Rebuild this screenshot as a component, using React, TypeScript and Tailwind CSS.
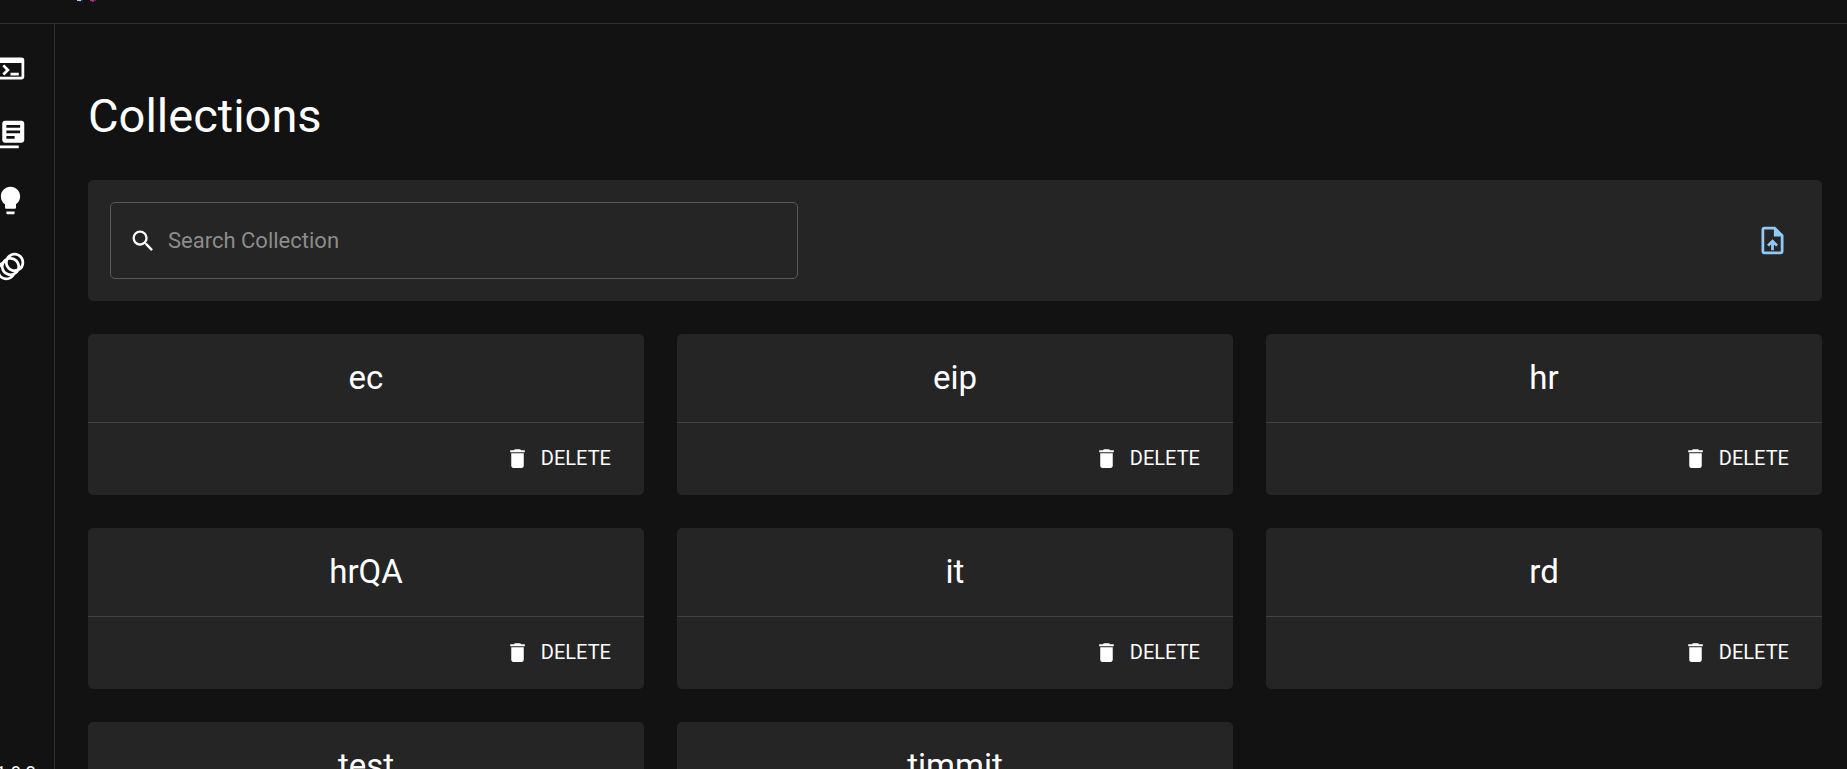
import { useState } from "react";
import {
  MdAnimation,
  MdDelete,
  MdLibraryBooks,
  MdLightbulb,
  MdSearch,
  MdTerminal,
  MdUploadFile,
} from "react-icons/md";

const navigation = [
  { label: "Playground", icon: MdTerminal },
  { label: "Collections", icon: MdLibraryBooks },
  { label: "Prompts", icon: MdLightbulb },
  { label: "Models", icon: MdAnimation },
];

const collections = ["ec", "eip", "hr", "hrQA", "it", "rd", "test", "timmit"];

function Header() {
  return (
    <header className="flex h-6 shrink-0 items-start overflow-hidden border-b border-[#303030] pl-[76px]">
      <svg width="22" height="3" viewBox="0 0 22 3" aria-hidden="true">
        <path d="M1 0h5v1H5v1H3V1H1z" fill="#b4c6ee" />
        <path d="M5 0h2v1H5v1H3V1h2z" fill="#24366f" />
        <path d="M14 0h5v1h-1v1h-2V1h-2z" fill="#e0244f" />
        <path d="M18 0h2v1h-2v1h-1V1h1z" fill="#24366f" />
      </svg>
    </header>
  );
}

function Sidebar() {
  return (
    <aside className="flex w-[55px] shrink-0 flex-col justify-between overflow-hidden border-r border-[#303030] pt-7">
      <nav className="-ml-1.5 flex flex-col items-start gap-[33px]">
        {navigation.map(({ label, icon: Icon }) => (
          <a key={label} href="#" aria-label={label}>
            <Icon className="size-[33px]" />
          </a>
        ))}
      </nav>
      <p className="-mb-4 -ml-1 text-lg leading-6">1.8.3</p>
    </aside>
  );
}

function CollectionCard({ name }: { name: string }) {
  return (
    <article className="rounded-[5px] bg-[#252525]">
      <h2 className="border-b border-[#424242] py-[22px] text-center text-[33px] leading-[44px]">{name}</h2>
      <div className="flex justify-end px-[33px] pt-[17px] pb-[19px]">
        <button type="button" className="flex items-center gap-[11px] text-xl leading-9">
          <MdDelete className="size-[25px]" />
          DELETE
        </button>
      </div>
    </article>
  );
}

export default function App() {
  const [query, setQuery] = useState("");
  const visible = collections.filter((name) => name.toLowerCase().includes(query.toLowerCase()));

  return (
    <div className="flex h-screen flex-col overflow-hidden bg-[#121212] font-['Roboto',sans-serif] text-white">
      <Header />
      <div className="flex min-h-0 flex-1">
        <Sidebar />
        <main className="min-w-0 flex-1 overflow-hidden pr-[25px] pl-[33px]">
          <h1 className="pt-[62px] pb-[34px] text-[47px] leading-[60px]">Collections</h1>
          <section className="flex items-center justify-between rounded-[5px] bg-[#252525] p-[22px]">
            <label className="flex h-[77px] w-full max-w-[688px] items-center gap-[11px] rounded-[5px] border border-[#5a5a5a] px-[18px]">
              <MdSearch className="size-7 shrink-0" />
              <input
                type="text"
                aria-label="Search Collection"
                placeholder="Search Collection"
                value={query}
                onChange={(event) => setQuery(event.target.value)}
                className="min-w-0 flex-1 bg-transparent text-[22px] outline-none placeholder:text-[#8c8c8c]"
              />
            </label>
            <button type="button" aria-label="Upload collection" className="p-[11px] text-[#90caf9]">
              <MdUploadFile className="size-[33px]" />
            </button>
          </section>
          <div className="mt-[33px] grid grid-cols-3 gap-[33px]">
            {visible.map((name) => (
              <CollectionCard key={name} name={name} />
            ))}
          </div>
        </main>
      </div>
    </div>
  );
}
